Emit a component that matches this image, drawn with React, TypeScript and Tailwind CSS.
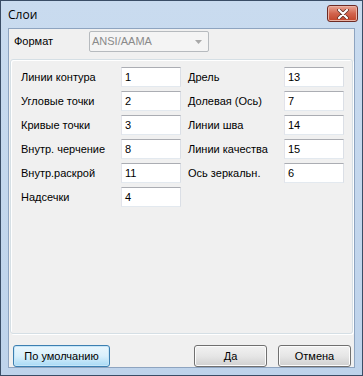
import React from 'react';

const rows: [string, string, string, string][] = [
  ['Линии контура', '1', 'Дрель', '13'],
  ['Угловые точки', '2', 'Долевая (Ось)', '7'],
  ['Кривые точки', '3', 'Линии шва', '14'],
  ['Внутр. черчение', '8', 'Линии качества', '15'],
  ['Внутр.раскрой', '11', 'Ось зеркальн.', '6'],
  ['Надсечки', '4', '', ''],
];

function Field({ value }: { value: string }) {
  return (
    <div className="h-[20px] w-[60px] border border-[#abadb3] border-l-[#e2e3ea] border-r-[#dbdfe6] border-b-[#e3e9ef] bg-white px-[3px] leading-[18px]">
      {value}
    </div>
  );
}

function Btn({ label, primary }: { label: string; primary?: boolean }) {
  return (
    <button
      className={
        primary
          ? 'h-[22px] w-[97px] rounded-[3px] border border-[#3c7fb1] bg-gradient-to-b from-[#eaf6fd] via-[#d9f0fc] to-[#a7d9f5] text-black shadow-[inset_0_0_0_1px_#c6e6f8]'
          : 'h-[22px] w-[73px] rounded-[3px] border border-[#707070] bg-gradient-to-b from-[#f2f2f2] via-[#e6e6e6] to-[#d0d0d0] text-black shadow-[inset_0_0_0_1px_#fcfcfc]'
      }
    >
      {label}
    </button>
  );
}

export default function App() {
  return (
    <div
      className="flex h-[376px] w-[363px] flex-col border border-[#3a4d66] bg-gradient-to-b from-[#c9dbef] to-[#bed3eb] text-[11px] text-black"
      style={{ fontFamily: '"Liberation Sans", Arial, sans-serif' }}
    >
      {/* Title bar */}
      <div className="relative flex h-[29px] items-center pl-[7px]">
        <span className="text-[12px]" style={{ fontFamily: '"Open Sans", "Liberation Sans", sans-serif' }}>
          Слои
        </span>
        <div className="absolute right-[4px] top-[4px] flex h-[17px] w-[31px] items-center justify-center rounded-[3px] border border-[#6d2a24] bg-gradient-to-b from-[#e8a493] via-[#d2644d] to-[#c14328] shadow-[inset_0_0_0_1px_#eab3a5]">
          <svg width="12" height="10" viewBox="0 0 12 10">
            <path d="M2 1 L10 9 M10 1 L2 9" stroke="#5a2a22" strokeWidth="3.6" strokeLinecap="round" />
            <path d="M2 1 L10 9 M10 1 L2 9" stroke="#ffffff" strokeWidth="2.2" strokeLinecap="round" />
          </svg>
        </div>
      </div>

      {/* Client area */}
      <div className="mx-[7px] mb-[7px] flex flex-1 flex-col border border-[#8ea4c0] bg-[#f0f0f0]">
        <div className="flex items-center pl-[5px] pt-[2px]">
          <span className="w-[75px]">Формат</span>
          <div className="flex h-[21px] w-[120px] items-center justify-between rounded-[2px] border border-[#b6babe] bg-[#f4f4f4] pl-[2px] pr-[6px] text-[#8a8a8a]">
            <span>ANSI/AAMA</span>
            <svg width="7" height="4" viewBox="0 0 7 4">
              <path d="M0 0 H7 L3.5 4 Z" fill="#a8a8a8" />
            </svg>
          </div>
        </div>

        <div className="mx-[1px] mt-[7px] h-[275px] rounded-[3px] border border-[#d5dfe5] shadow-[inset_1px_1px_0_#ffffff,1px_1px_0_#ffffff]">
          <div className="grid grid-cols-[100px_60px_7px_96px_60px] gap-y-[4px] pl-[10px] pt-[7px]">
            {rows.map(([l1, v1, l2, v2]) => (
              <React.Fragment key={l1}>
                <span className="leading-[20px]">{l1}</span>
                <Field value={v1} />
                <span />
                <span className="leading-[20px]">{l2}</span>
                {v2 ? <Field value={v2} /> : <span />}
              </React.Fragment>
            ))}
          </div>
        </div>

        <div className="mt-[11px] flex items-center pl-[4px] pr-[3px]">
          <Btn label="По умолчанию" primary />
          <div className="flex-1" />
          <Btn label="Да" />
          <div className="w-[11px]" />
          <Btn label="Отмена" />
        </div>
      </div>
    </div>
  );
}
